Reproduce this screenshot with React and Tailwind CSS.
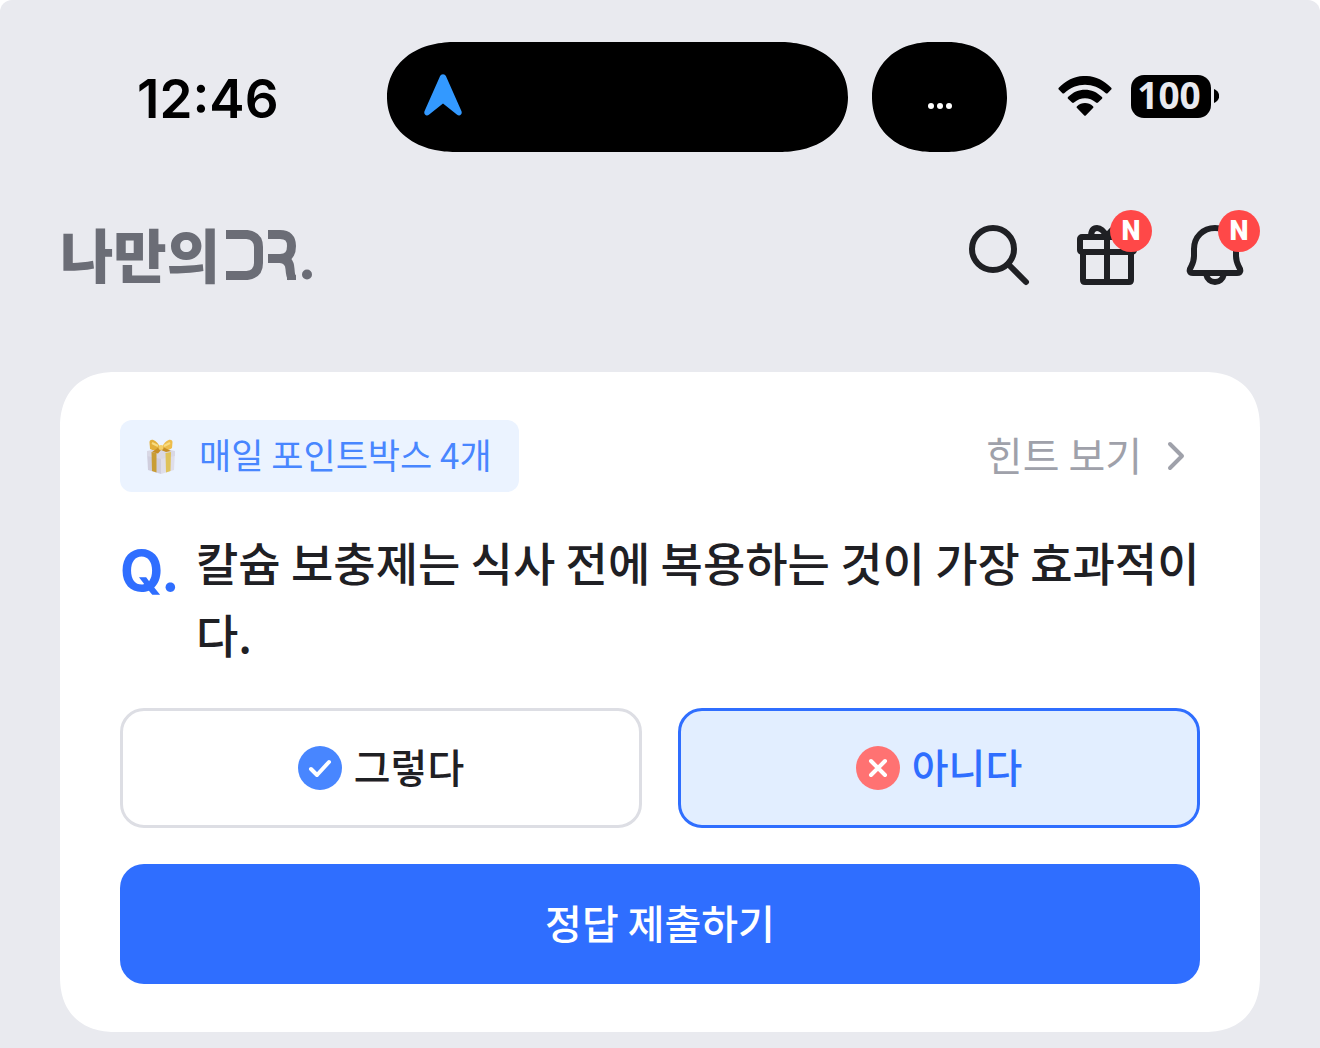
import React, { useState } from "react";

const stroke = {
  fill: "none",
  stroke: "currentColor",
  strokeWidth: 6,
  strokeLinecap: "round",
  strokeLinejoin: "round",
};

function StatusBar() {
  return (
    <div className="flex items-center pt-[42px] pr-[101px] pl-[137px] font-['Inter',sans-serif] text-black">
      <time className="w-[250px] shrink-0 pt-1 text-[53px] leading-[106px] font-semibold">12:46</time>
      <div className="flex h-[110px] min-w-0 flex-1 items-center rounded-[68px_/_55px] bg-black pb-1 pl-[37px] [corner-shape:superellipse(1.1)]">
        <svg className="h-[42px] w-[38px]" viewBox="0 0 38 42" aria-hidden="true">
          <path
            d="M16 2.3C17 -.4 21 -.4 22 2.3L37.4 37C38.8 40.5 35.5 43 32.8 40.5L19 29.5L5.2 40.5C2.5 43 -.8 40.5 .6 37Z"
            fill="#3399ff"
          />
        </svg>
      </div>
      <div className="ml-6 flex h-[110px] w-[135px] shrink-0 items-center justify-center gap-[3px] rounded-[60px_/_55px] bg-black pt-[18px] [corner-shape:superellipse(1.1)]">
        <span className="size-[6px] rounded-full bg-white" />
        <span className="size-[6px] rounded-full bg-white" />
        <span className="size-[6px] rounded-full bg-white" />
      </div>
      <div className="ml-[51px] flex shrink-0 items-center pb-[2px]">
        <svg className="h-10 w-[54px]" viewBox="0 0 54 40" aria-label="Wi-Fi">
          <path d="M.8 11.800C15.500-4 38.500-4 53.200 11.800Q54 12.700 53.200 13.600L49.600 17.200Q48.700 18 47.800 17.200C35.500 6 18.500 6 6.200 17.200Q5.300 18 4.400 17.200L.8 13.600Q0 12.700 .8 11.800Z" />
          <path d="M10 21C19.500 11.200 34.500 11.200 44 21Q44.800 22 44 22.800L40 26.600Q39 27.400 38 26.600C31.500 20.800 22.500 20.800 16 26.600Q15 27.400 14 26.600L10 22.800Q9.200 22 10 21Z" />
          <path d="M19 30.200C23.500 26 30.500 26 35 30.200Q35.800 31.200 35 32L28 39.200Q27 40.200 26 39.200L19 32Q18.200 31.200 19 30.200Z" />
        </svg>
        <div className="ml-[19px] flex items-center gap-[3px]">
          <span className="flex h-[43px] w-20 items-center justify-center rounded-[13px] bg-black pr-1 pb-[2px] font-['Noto_Sans'] text-[37px] leading-[40px] font-bold text-[#e9eaef]">
            100
          </span>
          <svg className="h-[14px] w-[5px]" viewBox="0 0 5 14" aria-hidden="true">
            <path d="M0 0C7 3 7 11 0 14Z" />
          </svg>
        </div>
      </div>
    </div>
  );
}

function NewBadge() {
  return (
    <span className="absolute -top-[9px] left-[39px] flex size-[42px] items-center justify-center rounded-full bg-[#ff4848] font-['Roboto',sans-serif] text-[27px] leading-none font-black text-white">
      N
    </span>
  );
}

function IconButton({ label, isNew, children }) {
  return (
    <button type="button" aria-label={label} className="relative size-[72px]">
      <svg className="size-full" viewBox="0 0 72 72" aria-hidden="true" {...stroke}>
        {children}
      </svg>
      {isNew && <NewBadge />}
    </button>
  );
}

function Logo() {
  return (
    <a href="#home" aria-label="나만의 DR." className="flex items-center gap-[6px] text-[#6b6d76]">
      <span className="pb-1 text-[58px] leading-[68px] font-black">나만의</span>
      <svg className="h-[54px] w-[88px]" viewBox="0 0 88 54" aria-hidden="true" fill="none" stroke="currentColor" strokeWidth="9">
        <path d="M0 6.500H21Q32.500 8 32.500 19V35Q32.500 46 21 47.500H0" />
        <path d="M42 6.500H54Q65.500 6.500 65.500 18Q65.500 30.500 54 30.500H42" />
        <path d="M54 30.500Q63.500 31 64 41Q64.500 48 65.500 49V52" />
        <circle cx="81" cy="46.500" r="5" fill="currentColor" stroke="none" />
      </svg>
    </a>
  );
}

function Header() {
  return (
    <header className="mt-[67px] flex items-center justify-between pr-[69px] pl-[60px] text-[#1f2024]">
      <Logo />
      <nav className="flex gap-9">
        <IconButton label="검색">
          <circle cx="30" cy="30" r="21" />
          <path d="M45 45L63 63" />
        </IconButton>
        <IconButton label="선물" isNew>
          <rect x="9" y="18" width="54" height="15" rx="2" />
          <path d="M12 33V61Q12 63 14 63H58Q60 63 60 61V33M36 18V63" />
          <path d="M36 18C33 12 30 9 26 9C22 9 20 12 20 18M36 18C39 12 42 9 46 9C50 9 52 12 52 18" />
        </IconButton>
        <IconButton label="알림" isNew>
          <path d="M36 9C24 9 15 18 15 30V37C15 42 14 44 12 48C10 51 10 54 14 54H58C62 54 62 51 60 48C58 44 57 42 57 37V30C57 18 48 9 36 9Z" />
          <path d="M27 55C28 60 32 63 36 63C40 63 44 60 45 55" />
        </IconButton>
      </nav>
    </header>
  );
}

function GiftBox() {
  return (
    <svg className="h-[35px] w-7" viewBox="0 0 28 35" aria-hidden="true">
      <path d="M0 13L14 16V35L1 31Z" fill="#d0cedd" />
      <path d="M14 16L28 12.500L27 31L14 35Z" fill="#dfdeea" />
      <path d="M0 12L14 9L28 12V17L14 20L0 17Z" fill="#d9d8e5" />
      <path d="M4.500 13L9.500 14V33.500L5 32Z" fill="#c99d35" />
      <path d="M18.500 14L24 13L23.500 32L19 33.500Z" fill="#dfc25b" />
      <path d="M13 8C9 0 3 -1 2.500 3L3 10C7 12 10 11 13 10Z" fill="#e2af3a" />
      <path d="M15 8C19 0 25 -1 25.500 3L25 9C21 12 18 11 15 10Z" fill="#edbd4c" />
      <path d="M12 8L5 13L11 14.500L14 11L19 13L24 12L16 8Z" fill="#c78f25" />
      <path d="M5 4L11 7M23 4L17 7" stroke="#f8dc80" strokeWidth="2" />
      <circle cx="14" cy="8.500" r="2.500" fill="#f4cf69" />
    </svg>
  );
}

const answers = [
  {
    id: "yes",
    label: "그렇다",
    circle: "#4886ff",
    mark: "M13 23L19 29L31 16",
  },
  {
    id: "no",
    label: "아니다",
    circle: "#ff7272",
    mark: "M15 15L29 29M29 15L15 29",
  },
];

function Answer({ answer, selected, onSelect }) {
  const tone = selected
    ? "border-[#2f6eff] bg-[#e2eeff] text-[#2f6eff]"
    : "border-[#dddee4] bg-white text-[#1f2024]";
  return (
    <button
      type="button"
      aria-pressed={selected}
      onClick={onSelect}
      className={`flex h-[120px] items-center justify-center gap-3 rounded-3xl border-[3px] text-[40px] leading-[56px] font-medium ${tone}`}
    >
      <svg className="size-11" viewBox="0 0 44 44" aria-hidden="true">
        <circle cx="22" cy="22" r="22" fill={answer.circle} />
        <path d={answer.mark} fill="none" stroke="white" strokeWidth="4" strokeLinecap="round" strokeLinejoin="round" />
      </svg>
      <span className="pb-1">{answer.label}</span>
    </button>
  );
}

function QuizCard() {
  const [selected, setSelected] = useState("no");
  return (
    <main className="mx-[60px] mt-[81px] rounded-[56px] bg-white px-[60px] py-12 [corner-shape:superellipse(1.2)]">
      <div className="flex items-center justify-between">
        <div className="flex h-[72px] items-center gap-6 rounded-xl bg-[#ebf3ff] px-[27px] text-[35px] leading-[54px] text-[#4886ff]">
          <GiftBox />
          <span className="pb-1">매일 포인트박스 4개</span>
        </div>
        <a href="#hint" className="flex items-center gap-[25px] pr-[15px] text-[40px] leading-[56px] text-[#9fa1aa]">
          <span className="pb-1">힌트 보기</span>
          <svg className="h-[30px] w-[18px]" viewBox="0 0 18 30" aria-hidden="true" fill="none" stroke="currentColor" strokeWidth="4" strokeLinecap="round" strokeLinejoin="round">
            <path d="M3 3L15 15L3 27" />
          </svg>
        </a>
      </div>
      <div className="mt-[33px] flex">
        <span className="w-[76px] shrink-0 pt-[10px] font-['Inter',sans-serif] text-[56px] leading-[72px] font-bold text-[#2f6eff]">
          Q.
        </span>
        <h1 className="text-[46px] leading-[72px] font-medium break-all text-[#1f2024]">
          칼슘 보충제는 식사 전에 복용하는 것이 가장 효과적이다.
        </h1>
      </div>
      <div className="mt-[39px] grid grid-cols-2 gap-9">
        {answers.map((answer) => (
          <Answer
            key={answer.id}
            answer={answer}
            selected={selected === answer.id}
            onSelect={() => setSelected(answer.id)}
          />
        ))}
      </div>
      <button type="button" className="mt-9 h-[120px] w-full rounded-3xl bg-[#2f6eff] pb-1 text-[40px] leading-[56px] font-medium text-white">
        정답 제출하기
      </button>
    </main>
  );
}

export default function App() {
  return (
    <div className="min-h-screen bg-white">
      <div className="min-h-screen rounded-t-xl bg-[#e9eaef] pb-4 font-['Noto_Sans_CJK_KR',sans-serif]">
        <StatusBar />
        <Header />
        <QuizCard />
      </div>
    </div>
  );
}
